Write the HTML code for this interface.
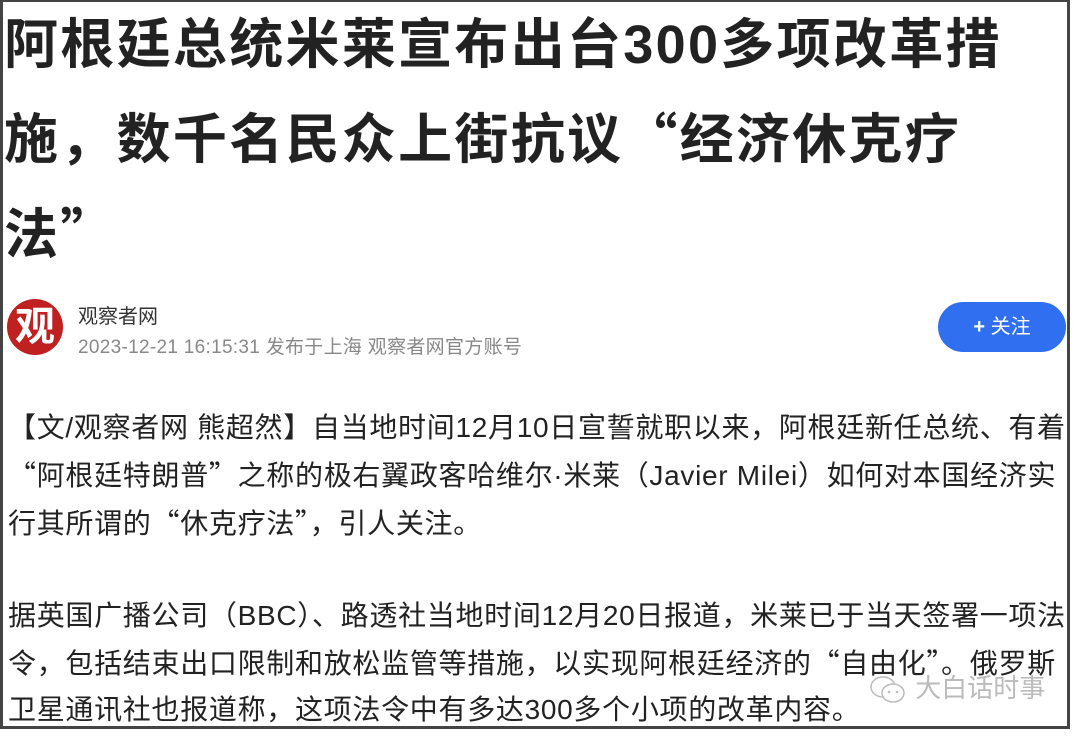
<!DOCTYPE html>
<html><head><meta charset="utf-8"><style>
html,body{margin:0;padding:0;background:#fff;}
body{width:1080px;height:737px;position:relative;overflow:hidden;font-family:"Liberation Sans","Noto Sans CJK SC",sans-serif;color:#222;}
.q{font-family:"Noto Sans CJK SC",sans-serif;}
.frame{position:absolute;left:0;top:0;width:1064px;height:724px;border:3px solid #444;border-top:2px solid #444;background:#fff;}
.title{position:absolute;left:4px;top:1px;font-size:54px;font-weight:bold;line-height:89px;color:#222;white-space:nowrap;letter-spacing:2.3px;}
.avatar{position:absolute;left:7px;top:299px;width:56px;height:56px;border-radius:50%;background:#c0201f;color:#fff;font-size:40px;line-height:56px;text-align:center;font-weight:bold;}
.name{position:absolute;left:78px;top:300px;font-size:20px;color:#333;}
.meta{position:absolute;left:78px;top:332px;font-size:19px;color:#888;white-space:nowrap;letter-spacing:0.3px;}
.btn{position:absolute;left:938px;top:302px;width:128px;height:50px;border-radius:25px;background:#2f6ff0;color:#fff;font-size:20px;line-height:50px;text-align:center;}
.body{position:absolute;left:8px;top:405px;font-size:28px;line-height:46px;color:#222;white-space:nowrap;letter-spacing:0.7px;}
.wm{position:absolute;left:868px;top:668px;color:#bbb;font-size:26px;white-space:nowrap;}
</style></head><body>
<div class="frame"></div>
<div class="title">阿根廷总统米莱宣布出台300多项改革措<br>施，数千名民众上街抗议<span class="q">“</span>经济休克疗<br>法<span class="q">”</span></div>
<div class="avatar">观</div>
<div class="name">观察者网</div>
<div class="meta">2023-12-21 16:15:31 发布于上海 观察者网官方账号</div>
<div class="btn"><b>+</b> 关注</div>
<div class="body">【文/观察者网 熊超然】自当地时间12月10日宣誓就职以来，阿根廷新任总统、有着<br><span class="q">“</span>阿根廷特朗普<span class="q">”</span>之称的极右翼政客哈维尔·米莱（Javier Milei）如何对本国经济实<br>行其所谓的<span class="q">“</span>休克疗法<span class="q">”</span>，引人关注。<br><br>据英国广播公司（BBC）、路透社当地时间12月20日报道，米莱已于当天签署一项法<br>令，包括结束出口限制和放松监管等措施，以实现阿根廷经济的<span class="q">“</span>自由化<span class="q">”</span>。俄罗斯<br>卫星通讯社也报道称，这项法令中有多达300多个小项的改革内容。</div>
<div class="wm"><svg width="40" height="32" viewBox="0 0 40 32" style="vertical-align:middle"><ellipse cx="15" cy="13" rx="12" ry="10" fill="none" stroke="#bbb" stroke-width="1.5"/><ellipse cx="25" cy="19" rx="11" ry="9" fill="#fff" stroke="#bbb" stroke-width="1.5"/><circle cx="21" cy="18" r="1.3" fill="#bbb"/><circle cx="29" cy="18" r="1.3" fill="#bbb"/></svg> 大白话时事</div>
</body></html>
